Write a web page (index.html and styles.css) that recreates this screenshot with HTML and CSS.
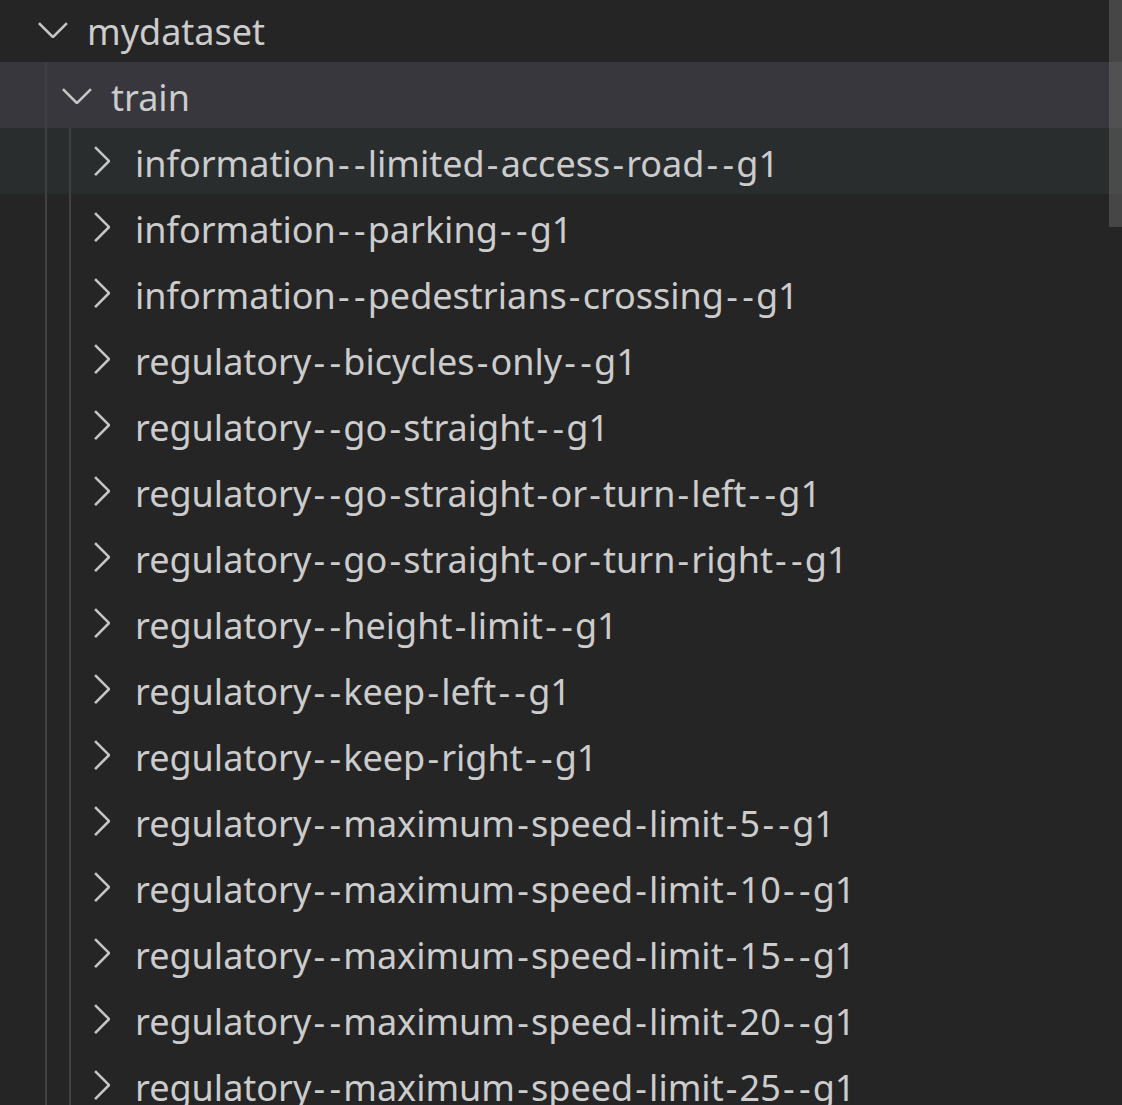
FILE: index.html
```html
<!DOCTYPE html>
<html>
<head>
<meta charset="utf-8">
<link rel="stylesheet" href="styles.css">
</head>
<body>
<div class="explorer">
  <div class="tree">
    <div class="row">
      <span class="twistie"><svg viewBox="0 0 16 16" width="48" height="48"><path d="M7.976 10.072l4.357-4.357.62.618L8.284 11h-.618L3 6.333l.619-.618 4.357 4.357z"/></svg></span>
      <span class="label">mydataset</span>
    </div>
    <div class="row selected">
      <span class="guide"></span>
      <span class="twistie"><svg viewBox="0 0 16 16" width="48" height="48"><path d="M7.976 10.072l4.357-4.357.62.618L8.284 11h-.618L3 6.333l.619-.618 4.357 4.357z"/></svg></span>
      <span class="label">train</span>
    </div>
    <div class="row hover">
      <span class="guide"></span><span class="guide"></span>
      <span class="twistie"><svg viewBox="0 0 16 16" width="48" height="48"><path d="M10.072 8.024L5.715 3.667l.618-.62L11 7.716v.618L6.333 13l-.618-.619 4.357-4.357z"/></svg></span>
      <span class="label">information<span class="h">-</span><span class="h">-</span>limited<span class="h">-</span>access<span class="h">-</span>road<span class="h">-</span><span class="h">-</span>g1</span>
    </div>
    <div class="row">
      <span class="guide"></span><span class="guide"></span>
      <span class="twistie"><svg viewBox="0 0 16 16" width="48" height="48"><path d="M10.072 8.024L5.715 3.667l.618-.62L11 7.716v.618L6.333 13l-.618-.619 4.357-4.357z"/></svg></span>
      <span class="label">information<span class="h">-</span><span class="h">-</span>parking<span class="h">-</span><span class="h">-</span>g1</span>
    </div>
    <div class="row">
      <span class="guide"></span><span class="guide"></span>
      <span class="twistie"><svg viewBox="0 0 16 16" width="48" height="48"><path d="M10.072 8.024L5.715 3.667l.618-.62L11 7.716v.618L6.333 13l-.618-.619 4.357-4.357z"/></svg></span>
      <span class="label">information<span class="h">-</span><span class="h">-</span>pedestrians<span class="h">-</span>crossing<span class="h">-</span><span class="h">-</span>g1</span>
    </div>
    <div class="row">
      <span class="guide"></span><span class="guide"></span>
      <span class="twistie"><svg viewBox="0 0 16 16" width="48" height="48"><path d="M10.072 8.024L5.715 3.667l.618-.62L11 7.716v.618L6.333 13l-.618-.619 4.357-4.357z"/></svg></span>
      <span class="label">regulatory<span class="h">-</span><span class="h">-</span>bicycles<span class="h">-</span>only<span class="h">-</span><span class="h">-</span>g1</span>
    </div>
    <div class="row">
      <span class="guide"></span><span class="guide"></span>
      <span class="twistie"><svg viewBox="0 0 16 16" width="48" height="48"><path d="M10.072 8.024L5.715 3.667l.618-.62L11 7.716v.618L6.333 13l-.618-.619 4.357-4.357z"/></svg></span>
      <span class="label">regulatory<span class="h">-</span><span class="h">-</span>go<span class="h">-</span>straight<span class="h">-</span><span class="h">-</span>g1</span>
    </div>
    <div class="row">
      <span class="guide"></span><span class="guide"></span>
      <span class="twistie"><svg viewBox="0 0 16 16" width="48" height="48"><path d="M10.072 8.024L5.715 3.667l.618-.62L11 7.716v.618L6.333 13l-.618-.619 4.357-4.357z"/></svg></span>
      <span class="label">regulatory<span class="h">-</span><span class="h">-</span>go<span class="h">-</span>straight<span class="h">-</span>or<span class="h">-</span>turn<span class="h">-</span>left<span class="h">-</span><span class="h">-</span>g1</span>
    </div>
    <div class="row">
      <span class="guide"></span><span class="guide"></span>
      <span class="twistie"><svg viewBox="0 0 16 16" width="48" height="48"><path d="M10.072 8.024L5.715 3.667l.618-.62L11 7.716v.618L6.333 13l-.618-.619 4.357-4.357z"/></svg></span>
      <span class="label">regulatory<span class="h">-</span><span class="h">-</span>go<span class="h">-</span>straight<span class="h">-</span>or<span class="h">-</span>turn<span class="h">-</span>right<span class="h">-</span><span class="h">-</span>g1</span>
    </div>
    <div class="row">
      <span class="guide"></span><span class="guide"></span>
      <span class="twistie"><svg viewBox="0 0 16 16" width="48" height="48"><path d="M10.072 8.024L5.715 3.667l.618-.62L11 7.716v.618L6.333 13l-.618-.619 4.357-4.357z"/></svg></span>
      <span class="label">regulatory<span class="h">-</span><span class="h">-</span>height<span class="h">-</span>limit<span class="h">-</span><span class="h">-</span>g1</span>
    </div>
    <div class="row">
      <span class="guide"></span><span class="guide"></span>
      <span class="twistie"><svg viewBox="0 0 16 16" width="48" height="48"><path d="M10.072 8.024L5.715 3.667l.618-.62L11 7.716v.618L6.333 13l-.618-.619 4.357-4.357z"/></svg></span>
      <span class="label">regulatory<span class="h">-</span><span class="h">-</span>keep<span class="h">-</span>left<span class="h">-</span><span class="h">-</span>g1</span>
    </div>
    <div class="row">
      <span class="guide"></span><span class="guide"></span>
      <span class="twistie"><svg viewBox="0 0 16 16" width="48" height="48"><path d="M10.072 8.024L5.715 3.667l.618-.62L11 7.716v.618L6.333 13l-.618-.619 4.357-4.357z"/></svg></span>
      <span class="label">regulatory<span class="h">-</span><span class="h">-</span>keep<span class="h">-</span>right<span class="h">-</span><span class="h">-</span>g1</span>
    </div>
    <div class="row">
      <span class="guide"></span><span class="guide"></span>
      <span class="twistie"><svg viewBox="0 0 16 16" width="48" height="48"><path d="M10.072 8.024L5.715 3.667l.618-.62L11 7.716v.618L6.333 13l-.618-.619 4.357-4.357z"/></svg></span>
      <span class="label">regulatory<span class="h">-</span><span class="h">-</span>maximum<span class="h">-</span>speed<span class="h">-</span>limit<span class="h">-</span>5<span class="h">-</span><span class="h">-</span>g1</span>
    </div>
    <div class="row">
      <span class="guide"></span><span class="guide"></span>
      <span class="twistie"><svg viewBox="0 0 16 16" width="48" height="48"><path d="M10.072 8.024L5.715 3.667l.618-.62L11 7.716v.618L6.333 13l-.618-.619 4.357-4.357z"/></svg></span>
      <span class="label">regulatory<span class="h">-</span><span class="h">-</span>maximum<span class="h">-</span>speed<span class="h">-</span>limit<span class="h">-</span>10<span class="h">-</span><span class="h">-</span>g1</span>
    </div>
    <div class="row">
      <span class="guide"></span><span class="guide"></span>
      <span class="twistie"><svg viewBox="0 0 16 16" width="48" height="48"><path d="M10.072 8.024L5.715 3.667l.618-.62L11 7.716v.618L6.333 13l-.618-.619 4.357-4.357z"/></svg></span>
      <span class="label">regulatory<span class="h">-</span><span class="h">-</span>maximum<span class="h">-</span>speed<span class="h">-</span>limit<span class="h">-</span>15<span class="h">-</span><span class="h">-</span>g1</span>
    </div>
    <div class="row">
      <span class="guide"></span><span class="guide"></span>
      <span class="twistie"><svg viewBox="0 0 16 16" width="48" height="48"><path d="M10.072 8.024L5.715 3.667l.618-.62L11 7.716v.618L6.333 13l-.618-.619 4.357-4.357z"/></svg></span>
      <span class="label">regulatory<span class="h">-</span><span class="h">-</span>maximum<span class="h">-</span>speed<span class="h">-</span>limit<span class="h">-</span>20<span class="h">-</span><span class="h">-</span>g1</span>
    </div>
    <div class="row">
      <span class="guide"></span><span class="guide"></span>
      <span class="twistie"><svg viewBox="0 0 16 16" width="48" height="48"><path d="M10.072 8.024L5.715 3.667l.618-.62L11 7.716v.618L6.333 13l-.618-.619 4.357-4.357z"/></svg></span>
      <span class="label">regulatory<span class="h">-</span><span class="h">-</span>maximum<span class="h">-</span>speed<span class="h">-</span>limit<span class="h">-</span>25<span class="h">-</span><span class="h">-</span>g1</span>
    </div>
  </div>
  <div class="scroll-slider"></div>
</div>
</body>
</html>
```
FILE: styles.css
```css
html, body {
  margin: 0;
  padding: 0;
  background: #252526;
  overflow: hidden;
}
.explorer {
  position: relative;
  width: 1122px;
  height: 1105px;
  overflow: hidden;
  background: #252526;
  font-family: "Noto Sans", "Open Sans", sans-serif;
  color: #cccccc;
}
.tree {
  display: flex;
  flex-direction: column;
  margin-top: -4px;
}
.row {
  display: flex;
  align-items: center;
  height: 66px;
  padding-left: 29px;
  flex: none;
}
.row.selected { background: #37373d; }
.row.hover { background: #2a2d2e; }
.guide {
  flex: none;
  width: 24px;
  height: 100%;
  background: linear-gradient(#404040, #404040) 16px 0 / 2px 100% no-repeat;
}
.twistie {
  flex: none;
  width: 48px;
  height: 48px;
  display: flex;
}
.twistie svg { fill: #c5c5c5; }
.label {
  margin-left: 10px;
  font-size: 36px;
  white-space: nowrap;
  line-height: 60px;
  padding-top: 6px;
}
.h {
  padding: 0 2.2px;
}
.scroll-slider {
  position: absolute;
  top: 0;
  right: 0;
  width: 13px;
  height: 227px;
  background: rgba(121, 121, 121, 0.4);
}
```
